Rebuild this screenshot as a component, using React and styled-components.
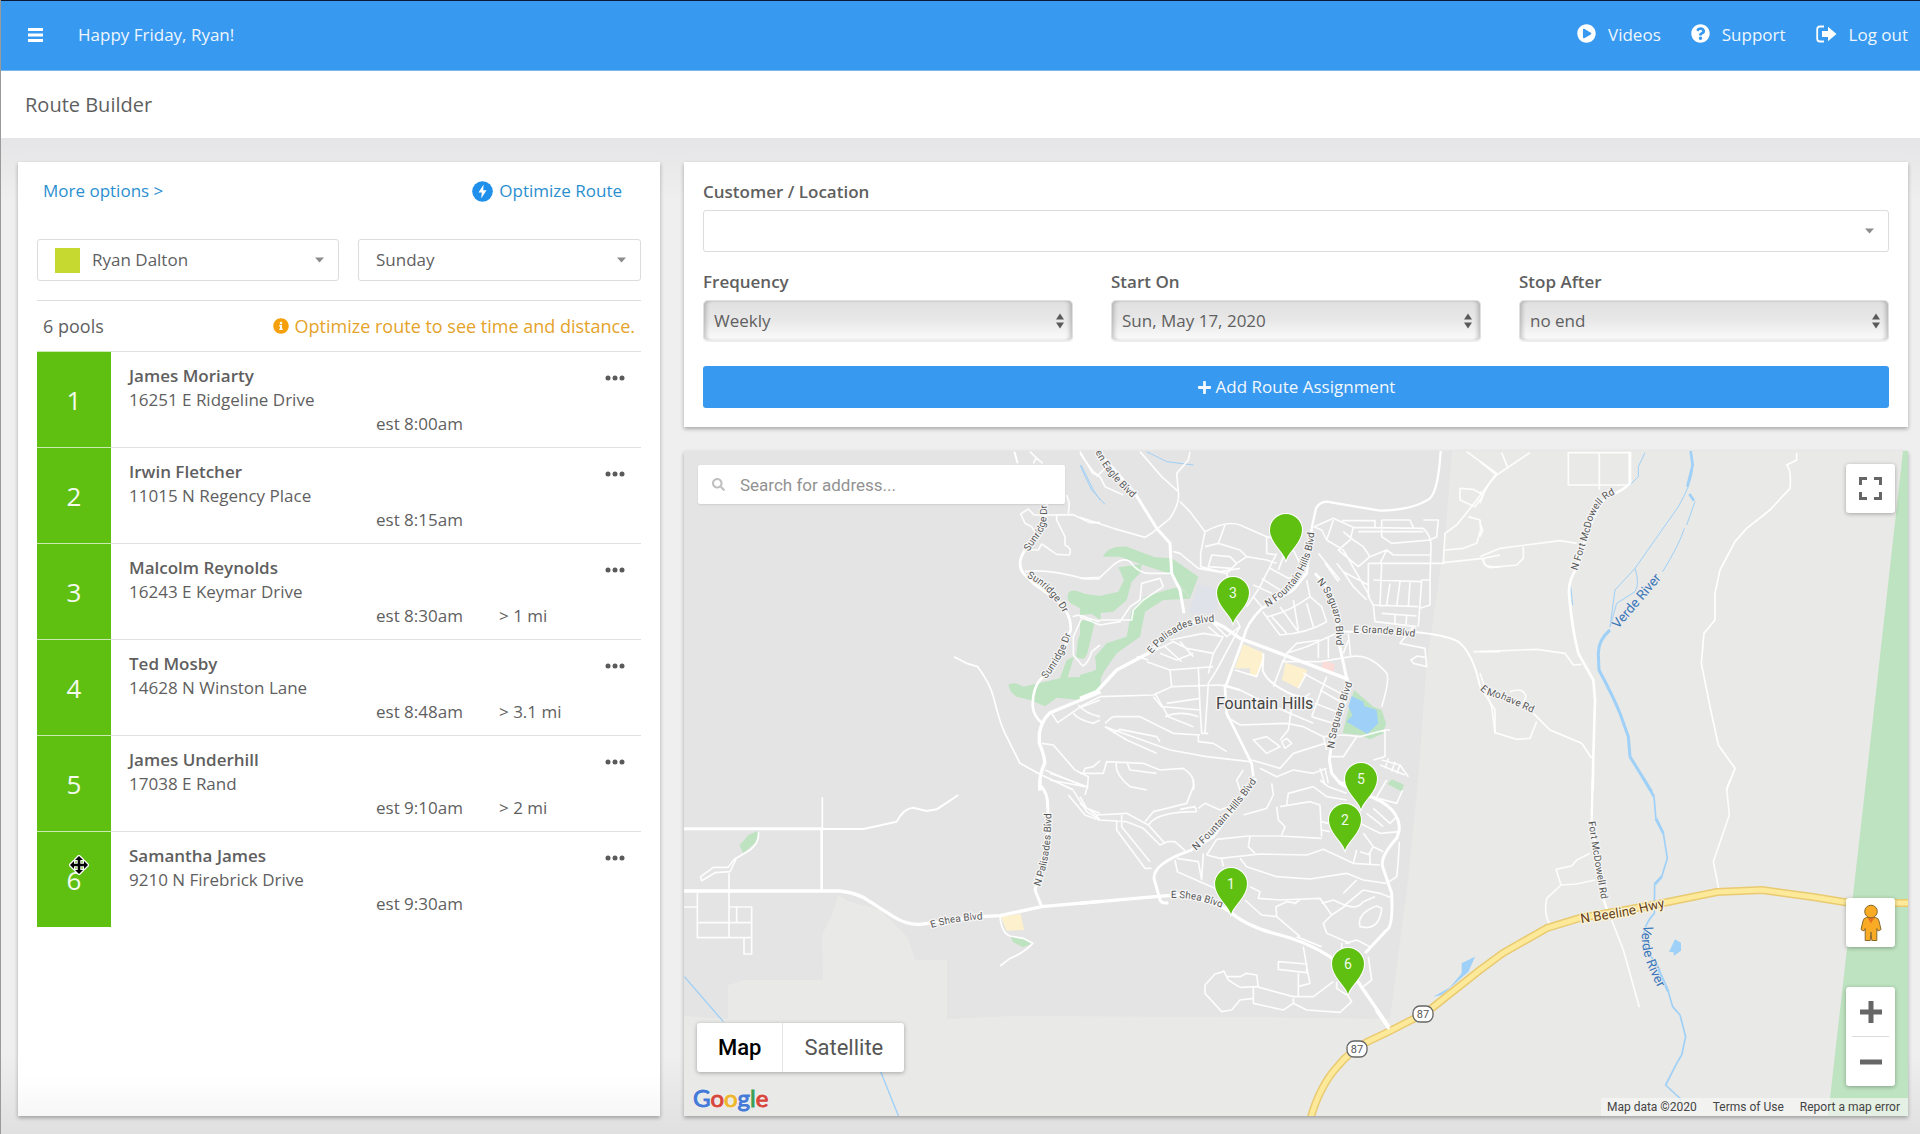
import React from "react";
import styled, { createGlobalStyle } from "styled-components";
import { FaPlayCircle, FaQuestionCircle, FaInfoCircle, FaPlus, FaSearch } from "react-icons/fa";

const GlobalStyle = createGlobalStyle`
  *, *::before, *::after { box-sizing: border-box; }
  body {
    margin: 0;
    background: #efefef;
    color: #5f5f5f;
    font-family: "Open Sans", "Noto Sans", sans-serif;
    font-size: 17px;
    line-height: 24px;
  }
  button, input, select { font: inherit; color: inherit; margin: 0; }
  a { color: inherit; text-decoration: none; }
`;

/* ---------- Page shell ---------- */

const Page = styled.div`
  display: flex;
  flex-direction: column;
  min-height: 100vh;
  border-left: 1px solid #9a9a9a;
`;

const TopBar = styled.header`
  display: flex;
  align-items: center;
  height: 71px;
  padding: 0 12px 2px 27px;
  border-top: 1px solid #0b1a33;
  border-bottom: 1px solid #7db5ef;
  background: #3799ef;
  color: #eef6fe;
`;

const MenuButton = styled.button`
  display: flex;
  padding: 0;
  border: 0;
  background: none;
  cursor: pointer;
`;

const Greeting = styled.span`
  margin-left: 35px;
`;

const TopLinks = styled.nav`
  display: flex;
  gap: 30px;
  margin-left: auto;
`;

const TopLink = styled.a`
  display: flex;
  align-items: center;
  gap: 12px;

  svg { display: block; margin-bottom: 2px; color: #fff; }
`;

const TitleBar = styled.div`
  display: flex;
  align-items: center;
  height: 67px;
  padding: 0 24px;
  background: #fff;
`;

const PageTitle = styled.h1`
  margin: 0;
  font-size: 20px;
  font-weight: 400;
`;

const Main = styled.main`
  flex: 1;
  display: grid;
  grid-template-columns: minmax(0, 642fr) minmax(0, 1224fr);
  gap: 24px;
  padding: 24px 12px 18px 17px;
  background:
    linear-gradient(to bottom, #e5e5e7, rgba(239, 239, 239, 0) 64px),
    linear-gradient(to top, #e0e0e0, #efefef 80px);
`;

const Card = styled.section`
  background: #fff;
  box-shadow: 0 2px 4px rgba(0, 0, 0, 0.3);
`;

/* ---------- Route list ---------- */

const RouteCard = styled(Card)`
  padding: 17px 19px 24px;
  background: linear-gradient(to top, #f7f7f7, #fff 40px);
`;

const LinkRow = styled.div`
  display: flex;
  justify-content: space-between;
  padding: 0 19px 0 6px;
  color: #2a8fd0;
`;

const ActionLink = styled.a`
  display: flex;
  align-items: center;
  gap: 6px;
`;

const FilterRow = styled.div`
  display: grid;
  grid-template-columns: minmax(0, 302fr) minmax(0, 283fr);
  gap: 19px;
  margin-top: 36px;
  padding-bottom: 19px;
  border-bottom: 1px solid #dedede;
`;

const SelectBox = styled.div`
  position: relative;
  display: grid;
  align-items: center;
`;

const PlainSelect = styled.select`
  width: 100%;
  height: 42px;
  padding: 0 32px 0 ${(p) => (p.$swatch ? "54px" : "17px")};
  border: 1px solid #dcdcdc;
  border-radius: 3px;
  background: #fff;
  appearance: none;
`;

const ColorSwatch = styled.span`
  position: absolute;
  left: 18px;
  width: 25px;
  height: 25px;
  background: #c5d930;
  pointer-events: none;
`;

const Caret = styled.svg`
  position: absolute;
  right: 15px;
  pointer-events: none;
`;

const SummaryRow = styled.div`
  display: flex;
  align-items: center;
  justify-content: space-between;
  height: 50px;
  padding: 0 6px;
  font-size: 18px;
`;

const Notice = styled.span`
  display: flex;
  align-items: center;
  gap: 6px;
  color: #e5a32a;

  svg { color: #f5a00a; }
`;

const StopList = styled.ol`
  margin: 0;
  padding: 0;
  list-style: none;
`;

const Stop = styled.li`
  display: grid;
  grid-template-columns: 74px minmax(0, 1fr) auto;
  height: 96px;
`;

const StopNumber = styled.div`
  position: relative;
  display: grid;
  place-items: center;
  border-top: 1px solid #c9eab0;
  background: #5fc012;
  color: #f4fbee;
  font-size: 26px;
  cursor: move;
`;

const DragCursor = styled.svg`
  position: absolute;
  left: 32px;
  top: 23px;
`;

const StopBody = styled.div`
  padding: 12px 0 0 18px;
  border-top: 1px solid #e2e2e2;
`;

const StopName = styled.div`
  font-weight: 600;
`;

const StopMeta = styled.div`
  display: grid;
  grid-template-columns: 247px 123px 1fr;

  span:first-child { grid-column: 2; }
`;

const StopMenu = styled.div`
  padding: 14px 16px 0 0;
  border-top: 1px solid #e2e2e2;
`;

const DotsButton = styled.button`
  display: flex;
  align-items: center;
  height: 24px;
  padding: 0;
  border: 0;
  background: none;
  cursor: pointer;
`;

/* ---------- Assignment form ---------- */

const RightColumn = styled.div`
  display: flex;
  flex-direction: column;
  gap: 24px;
`;

const FormCard = styled(Card)`
  display: grid;
  gap: 18px;
  padding: 18px 19px 19px;
`;

const Field = styled.div`
  display: grid;
  gap: 6px;
`;

const FieldRow = styled.div`
  display: grid;
  grid-template-columns: repeat(3, minmax(0, 1fr));
  gap: 38px;
  margin-bottom: 6px;
`;

const FieldLabel = styled.label`
  font-weight: 600;
`;

const ShadedSelect = styled.select`
  width: 100%;
  height: 42px;
  padding: 0 28px 0 10px;
  border: 1px solid #e0e0e0;
  border-bottom: 2px solid #ececec;
  border-radius: 5px;
  background: linear-gradient(to bottom, #e0e0e0, #e8e8e8 50%, #fbfbfb);
  box-shadow: inset 4px 0 4px -2px rgba(0, 0, 0, 0.22), inset -4px 0 4px -2px rgba(0, 0, 0, 0.22);
  appearance: none;
`;

const Stepper = styled.svg`
  position: absolute;
  right: 9px;
  pointer-events: none;
`;

const AddButton = styled.button`
  display: flex;
  align-items: center;
  justify-content: center;
  gap: 4px;
  height: 42px;
  border: 0;
  border-radius: 3px;
  background: #3799ef;
  color: #f2f8fe;
  cursor: pointer;
`;

/* ---------- Map ---------- */

const MapPanel = styled.section`
  position: relative;
  flex: 1;
  min-height: 600px;
  overflow: hidden;
  background: #e9e9e7;
  box-shadow: 0 2px 4px rgba(0, 0, 0, 0.3);
  color: #444;
  font-family: Roboto, sans-serif;
`;

const MapDrawing = styled.svg`
  position: absolute;
  inset: 0;
  width: 100%;
  height: 100%;
`;

const MapSearch = styled.label`
  position: absolute;
  left: 14px;
  top: 14px;
  display: flex;
  align-items: center;
  gap: 15px;
  width: 367px;
  height: 39px;
  padding: 0 14px;
  border-radius: 2px;
  background: #fff;
  box-shadow: 0 1px 2px rgba(0, 0, 0, 0.1);
  color: #c0c0c0;
`;

const SearchInput = styled.input`
  flex: 1;
  min-width: 0;
  padding: 0;
  border: 0;
  outline: 0;
  background: none;
  color: #555;

  &::placeholder { color: #929292; opacity: 1; }
`;

const Floating = styled.div`
  position: absolute;
  ${(p) => (p.$left ? `left: ${p.$left}px;` : "right: 13px;")}
  ${(p) => (p.$top ? `top: ${p.$top}px;` : `bottom: ${p.$bottom}px;`)}
  display: flex;
  flex-direction: ${(p) => (p.$row ? "row" : "column")};
  border-radius: 3px;
  background: #fff;
  box-shadow: 0 1px 4px rgba(0, 0, 0, 0.3);
`;

const MapButton = styled.button`
  display: grid;
  place-items: center;
  width: 49px;
  height: 49px;
  padding: 0;
  border: 0;
  background: none;
  cursor: pointer;
`;

const Divider = styled.div`
  height: 1px;
  margin: 0 6px;
  background: #dcdcdc;
`;

const TypeButton = styled.button`
  height: 49px;
  padding: 0 21px;
  border: 0;
  border-left: ${(p) => (p.$active ? "0" : "1px solid #e4e4e4")};
  background: none;
  color: ${(p) => (p.$active ? "#000" : "#565656")};
  font-size: 22px;
  font-weight: ${(p) => (p.$active ? 500 : 400)};
  cursor: pointer;
`;

const Logo = styled.a`
  position: absolute;
  left: 9px;
  bottom: 2px;
  font-family: Lato, sans-serif;
  font-size: 24px;
  line-height: 32px;
  text-shadow: 0 0 2px #fff, 0 0 2px #fff;
`;

const LogoLetter = styled.span`
  color: ${(p) => p.$color};
  -webkit-text-stroke: 1px ${(p) => p.$color};
`;

const Attribution = styled.div`
  position: absolute;
  right: 0;
  bottom: 0;
  display: flex;
  gap: 16px;
  padding: 0 8px 0 6px;
  background: rgba(245, 245, 245, 0.7);
  font-size: 12px;
  line-height: 18px;
`;

const RoadLabel = styled.text`
  fill: #575757;
  stroke: #f4f4f4;
  stroke-width: 8px;
  stroke-linejoin: round;
  paint-order: stroke;
  font-size: 30px;
`;

const RiverLabel = styled(RoadLabel)`
  fill: #3b77bb;
  stroke: #e9e9e7;
  stroke-width: 4px;
  font-size: 40px;
`;

const HighwayLabel = styled(RoadLabel)`
  fill: #64401a;
  stroke: #fdf3d0;
  font-size: 40px;
`;

const TownLabel = styled(RoadLabel)`
  fill: #444;
  font-size: 48px;
`;

const ShieldText = styled.text`
  fill: #555;
  font-size: 11px;
  text-anchor: middle;
`;

const PinText = styled.text`
  fill: #f1fae9;
  font-size: 14px;
  text-anchor: middle;
`;

/* ---------- Data ---------- */

const stops = [
  { name: "James Moriarty", address: "16251 E Ridgeline Drive", time: "est 8:00am" },
  { name: "Irwin Fletcher", address: "11015 N Regency Place", time: "est 8:15am" },
  { name: "Malcolm Reynolds", address: "16243 E Keymar Drive", time: "est 8:30am", distance: "> 1 mi" },
  { name: "Ted Mosby", address: "14628 N Winston Lane", time: "est 8:48am", distance: "> 3.1 mi" },
  { name: "James Underhill", address: "17038 E Rand", time: "est 9:10am", distance: "> 2 mi" },
  { name: "Samantha James", address: "9210 N Firebrick Drive", time: "est 9:30am", dragging: true },
];

const pins = [
  { x: 1286, y: 560, label: "" },
  { x: 1233, y: 623, label: "3" },
  { x: 1361, y: 809, label: "5" },
  { x: 1345, y: 850, label: "2" },
  { x: 1231, y: 914, label: "1" },
  { x: 1348, y: 994, label: "6" },
];

const shields = [
  { x: 1423, y: 1014 },
  { x: 1357, y: 1049 },
];

const PARK = "#bee3c0";
const WATER = "#9fd0f7";
const SHOP = "#fdf1cd";

/* Each tile is drawn at three times its size; roads are [width, path]. */
const tiles = [
  {
    id: "nw",
    x: 680,
    y: 440,
    areas: [
      [PARK, "M1163 465Q1170 443 1200 456L1262 482V540L1235 522 1180 494Q1160 485 1163 465Z"],
      [PARK, "M1214 545L1246 540 1222 640Q1210 665 1188 650L1194 600Z"],
      [PARK, "M985 735Q1000 722 1030 740L1140 715 1160 660 1182 650 1163 712 1235 710 1262 660V760L1200 780 1130 773 1095 799 1050 780 1010 770Q990 758 985 735Z"],
    ],
    rivers: [[3, "M1203 75L1240 150 1260 180"]],
    roads: [
      [8, "M1100 190L1095 240 1070 290 1035 330Q1008 370 1030 400L1060 430 1130 480Q1175 520 1172 570L1150 640 1085 715Q1058 740 1058 800Q1062 830 1085 848"],
      [10, "M1262 755L1110 818Q1085 840 1078 880V910Q1095 950 1094 970Q1075 1010 1080 1052"],
      [5, "M822 650L860 670 893 680Q930 730 940 770Q960 850 975 880L1020 970 1080 1003 1180 1050"],
      [6, "M1003 35L1013 70"],
      [4, "M1100 225L1180 224 1230 248H1260M1035 395Q1100 385 1215 417H1260M1045 330H1075L1085 312 1130 343 1168 345Q1178 325 1155 315V290L1130 240V225M1070 285L1055 260 1035 250 1022 222 1045 207 1062 225H1100M1160 165L1168 190 1165 220M1050 35L1065 50 1088 70M1068 55L1060 70M1200 35L1238 100 1260 110M1178 530Q1200 520 1225 535L1260 545M1205 535L1180 590V645L1208 678Q1225 670 1235 635L1260 615M1115 820L1133 848 1195 805 1260 780M1180 820Q1195 840 1240 850L1260 840M1195 795Q1215 820 1260 830M1085 910L1120 915 1185 990 1225 1010 1222 1045M1210 1000L1215 985 1240 980 1260 962M1095 990L1215 1040"],
    ],
    labels: [
      ["Sunridge Dr", "M1046 335L1085 280Q1108 235 1098 180"],
      ["Sunridge Dr", "M1040 412Q1105 440 1150 520"],
      ["Sunridge Dr", "M1098 718Q1155 650 1180 560"],
    ],
  },
  {
    id: "n",
    x: 1080,
    y: 440,
    areas: [
      ["#dfe2e8", "M355 430L430 455 400 520 325 520Z"],
      [PARK, "M68 350Q85 315 140 320L225 352 275 355 355 410 330 475 295 430 265 400 190 375 120 350Z"],
      [PARK, "M115 382L185 372 180 400 155 425 140 480 100 515 0 525V460L60 468 115 455 132 420Z"],
      [PARK, "M300 440L330 476 250 480 195 515 180 590 110 640 75 690 40 755 0 775V705L50 690 45 650 80 610 140 590 155 510 195 470 260 450Z"],
      [PARK, "M0 540L40 545 15 655H0Z"],
      [SHOP, "M490 612L552 640V660L530 710 510 705V685H465Z"],
      [SHOP, "M617 668L682 690 655 745 606 720Z"],
      ["#fbdcd8", "M730 662L765 672 758 705 722 690Z"],
      [PARK, "M822 750L880 800 905 810 918 850 910 880 870 898 840 885 788 880 800 830Z"],
      [WATER, "M815 768L850 785 852 798 890 810 895 850 862 882 800 845 818 825 805 800Z"],
      [PARK, "M935 1018L972 1035 965 1052 925 1032Z"],
    ],
    rivers: [[3, "M0 75L35 150 75 193M200 35L260 65 340 75"]],
    roads: [
      [4, "M180 35L245 110 295 155Q300 190 270 235L215 280 195 292 100 265 0 232M300 185L330 215 375 275M330 35L325 60 290 100 295 155M50 110L80 80M0 40L40 95 60 110 75 140 130 165M375 275Q440 240 480 255L560 290 600 300M375 275L362 340V380L420 395 480 385M280 335L300 340 355 385 440 400M435 255L415 310 375 320M415 310L480 330 500 350 470 370 450 350 395 345 385 380 455 385M500 350L560 360 590 370M590 340L540 440 500 500M610 350L595 390M570 385L625 415 680 400M545 415L600 450M520 435L575 460M560 290V340L590 345M640 330L660 370"],
      [4, "M0 415L60 412 100 375Q130 350 150 365Q175 400 210 400H275M0 530L60 555 120 545 150 500 180 480 185 430 240 415 250 440 190 480 160 510 155 540 60 540"],
      [4, "M548 515L600 585Q680 580 740 545L725 500 690 470 680 420M575 530L620 580M600 500L655 575M640 480L655 570M560 530Q620 520 690 470M700 560L680 490M470 370L440 400 445 420M520 470L545 500"],
      [4, "M700 262L760 235 820 262 1030 265Q1055 290 1053 320L1050 420 1025 420 1015 560M760 240L740 300 790 330 870 470M770 370L790 395 865 435M820 262L810 300 775 330 835 380 870 350 920 330 940 345H1050M905 240V290L935 310 1050 300M785 242H885V262M905 240H990L1000 262M820 300L850 320 870 350M1030 240L1075 240 1070 290 1050 300M865 370H1090L1095 280 1130 255Q1200 170 1250 100M920 330L900 370M865 370V470L880 495 1015 500M880 420L1025 425M905 370L900 500M960 425L950 500M930 430L920 495M990 427L985 500M880 495L885 545 1010 560M905 520L1010 528M945 525V552M980 527L978 555M1025 420H1050V495L1020 505M790 395L820 440 860 480M735 370L775 425M715 340L780 420M835 275H1030M740 300L725 270 705 262M790 275L820 300M1000 560L960 610 1035 625 1040 680 1000 670 993 660 1012 648 1035 652"],
      [4, "M1160 35L1250 100M1140 145L1180 148 1210 165 1185 200 1140 180ZM1165 230L1200 240 1202 270 1190 310 1150 325 1095 330M1090 368L1210 355M1260 380Q1205 385 1210 355L1260 345M1180 635H1260M1200 740L1245 810V880"],
      [4, "M805 580L812 650Q870 640 920 700Q930 720 905 800M770 580L680 620 620 640 610 665 720 665 812 650M715 600V655M745 590V655M620 640L650 610 720 600M805 600L790 640M470 540L480 560 440 590 395 545M420 590L385 560"],
      [6, "M550 640L548 690Q560 730 640 765L700 780"],
      [4, "M610 660L580 740M740 710L695 830M670 700L800 770M720 750L790 790M705 790L770 815M695 830L760 850M680 700L655 745M465 690L530 710 552 650"],
      [4, "M480 560L410 690 385 730 375 880M355 680L360 800 365 880H385M430 590L400 640 385 700M270 600L370 580 430 590M185 650L280 605 320 625 400 640M200 665L270 690 400 680M240 640L290 660 340 640M270 690L275 740 220 765 60 770M275 740L420 735 480 750 560 790 700 850M0 800L60 770M220 770L245 800 360 810M260 790L360 775M255 830Q300 810 355 830M225 760L265 830 340 860M100 830L180 830 280 880 360 885M355 885V905L400 910 440 935M75 860L270 930 380 950 510 965M100 880L120 868 230 890 240 905M75 850Q90 835 100 830M75 860L140 900 230 940M205 660L170 650M255 620L305 665M300 605L340 650"],
      [4, "M0 1000L70 1000 80 965 190 970 240 990 310 985Q350 1010 340 1050M110 965Q100 1000 150 1040L200 1050M140 965L150 990 230 1000M480 855L620 850 670 860 730 890 740 930M440 830L480 855M515 960L600 985 640 940 735 910M520 900L560 890 600 920 560 940ZM600 900L625 870 635 800 690 760M605 905L620 895 635 910 615 925ZM730 890L790 885 840 890 915 870H930M750 950H790L830 890M915 870V950L880 960M905 960L960 975 985 1010M900 975L975 1005M925 955L915 985M945 965L935 995M960 975L950 1000M490 990L470 1020 480 1050M540 985L590 1010 640 990 700 1000 740 985M735 985L745 1030M720 985L735 1035"],
      [6, "M430 735L480 750"],
      [7, "M695 265L708 205Q720 185 740 185L900 212Q1000 210 1050 175Q1075 150 1082 33"],
      [6, "M790 575H1000Q1100 585 1135 605Q1180 640 1200 740"],
      [9, "M50 30L165 160 230 265 270 310 275 400 300 450 312 520"],
      [10, "M0 775L50 755 110 690 205 640Q300 540 390 540L430 560 480 595 600 640 805 718"],
      [8, "M695 265L680 400 640 450 545 505Q500 550 492 590L435 745 440 820 515 970 520 1010"],
      [9, "M705 400Q770 470 770 520L775 600 800 715 810 740 755 910 748 960 755 1000 780 1030 835 1060"],
    ],
    labels: [
      ["en Eagle Blvd", "M46 36Q80 110 175 190"],
      ["E Palisades Blvd", "M215 642Q290 545 410 545"],
      ["N Fountain Hills Blvd", "M562 502Q700 420 704 260"],
      ["N Saguaro Blvd", "M710 425Q775 500 768 615"],
      ["E Grande Blvd", "M820 578L905 580 1020 592"],
      ["N Saguaro Blvd", "M762 926L775 850 822 715"],
    ],
  },
  {
    id: "ne",
    x: 1480,
    y: 440,
    areas: [],
    rivers: [
      [3, "M638 90Q630 140 595 200L465 385 405 450 390 560M495 38L475 80V110L450 135 400 165M645 185L620 255M613 265Q600 310 548 395M465 385Q480 430 465 455L410 490 390 560M272 440L278 495"],
      [9, "M390 570Q355 600 355 640L357 690Q400 770 420 820L445 890 450 950 515 1055"],
      [8, "M632 33L638 75 622 140M628 162L642 182"],
    ],
    roads: [
      [4, "M265 38H448V135H265ZM358 38V150M0 65L50 105Q20 130 0 190M50 105L150 38M65 38L82 80M0 155L12 165M0 250L8 270 0 290M0 350L60 325 240 302 290 310M10 355Q10 380 30 383L110 375 130 355V320M0 635L170 628 255 640 280 675 305 673M0 700L35 800 45 878 110 898 150 895 170 845M90 755Q130 740 138 770L130 790"],
      [5, "M160 820L210 870 305 910 335 955"],
      [5, "M950 38V60L920 75Q935 90 930 145L870 210 800 265 765 305 720 390 705 460V540L672 580 664 670 690 800 715 915 765 985 740 1050"],
      [8, "M450 35V130Q430 150 395 165Q350 170 290 385Q265 420 267 460Q275 560 295 640L340 720 345 780 340 950 338 1050"],
    ],
    labels: [
      ["N Fort McDowell Rd", "M292 392L330 270Q345 190 400 165"],
      ["E Mohave Rd", "M0 748Q15 768 60 775L165 822"],
    ],
    riverLabels: [["Verde River", "M414 568L570 385"]],
  },
  {
    id: "sw",
    x: 680,
    y: 780,
    areas: [
      [PARK, "M178 195Q185 190 205 165L235 152 230 185 190 220Z"],
      [PARK, "M992 470L1040 476 1058 490 1030 502 1000 487Z"],
      [SHOP, "M962 410L1022 402 1032 450 980 452Z"],
    ],
    rivers: [[4, "M13 590L130 725M600 870L657 1012"]],
    roads: [
      [9, "M0 146H427"],
      [6, "M427 147H550L650 125Q670 85 700 83L740 93 770 88 835 45"],
      [5, "M427 52V146"],
      [8, "M425 146V330"],
      [4, "M165 235L145 262 100 262 62 290 65 302 105 278 150 275 168 238M147 280V472M13 381H50M52 340V473H215V381H147M52 428H215M170 381V428M192 473V522H215V473M1110 0L1215 20M1110 -20L1222 20 1215 45M1180 32L1220 95 1260 118M1165 45L1215 105 1250 118"],
      [5, "M235 155Q240 185 210 210L165 237M960 410Q965 460 990 468L1030 475 1058 490Q1030 520 990 535L960 558"],
      [9, "M1080 0V15Q1105 40 1103 80L1105 110 1100 220Q1070 310 1065 330L1085 380"],
      [10, "M0 333H480Q540 340 570 365L640 410Q680 435 720 433L900 410 960 407 1085 380 1262 364"],
    ],
    labels: [
      ["E Shea Blvd", "M755 444Q830 420 920 418"],
      ["N Palisades Blvd", "M1080 320Q1118 220 1113 80"],
    ],
  },
  {
    id: "s",
    x: 1080,
    y: 780,
    areas: [
      [WATER, "M1060 650L1110 622 1145 580V550L1185 530 1165 575 1120 615 1085 645Z"],
      [PARK, "M935 0L968 12V36L922 12Z"],
    ],
    rivers: [],
    roads: [
      [4, "M0 70L50 105 140 100 205 135 255 190M0 50L20 85 60 100M50 105L55 120 140 125 190 145 240 195 262 185M110 120V150L195 265 215 265M125 105V140L210 245M262 185L285 185 315 212M205 135Q230 95 350 95M195 125L220 95 260 85 320 70 340 20V0M350 95L345 80 300 88M355 85L375 70 420 90 460 75M490 105L560 85 580 45 575 10M620 75L625 40 700 20M600 80L690 65 720 75 725 170M590 80L595 120 615 140 605 165M410 178L505 168 600 168 725 175M410 178L380 225M510 168L505 200 525 220M380 225L420 235 540 222 680 225 730 208 820 250 900 255"],
      [4, "M290 235L355 245 365 300M285 240L292 275 450 345M425 235L430 260M480 235L500 260 590 290 690 297 800 280 850 300 920 310M365 300L370 220M510 320L540 335 535 355 600 360 720 355 755 405 730 430 740 460 810 490M495 360L545 405 590 410M650 370L620 365 588 380 590 410 660 470M640 372L660 360M795 375L850 330 900 340 930 352M795 375Q830 390 850 365L885 350M755 405L800 375M790 340L830 300M725 370L760 360 800 378M840 440Q830 400 890 378L905 385Q900 440 860 443ZM795 490L830 480 870 500M785 488V505"],
      [4, "M670 500L680 560 690 610 655 620M595 545V568L680 578V552ZM655 580V650M430 570L445 600 480 622 530 620 640 650 700 650 760 605M440 590L480 590 500 580 530 585 535 620M430 575L405 582 375 615V640L425 695 455 690 480 660 520 655M520 620V670L610 690 640 670V655M640 670L680 690 780 697 815 665 800 640M865 530L875 600 850 620M770 605V625L800 645"],
      [4, "M840 130L900 160 958 155M820 250L830 210M870 255V215M850 160L880 200 865 225M840 215L870 225M958 185Q955 250 950 290L920 310M880 85L930 130 950 110M860 100L910 140M725 125L745 130M725 150L750 155M880 200L910 215M885 60L920 0M895 55L950 70 968 30M720 0L745 20 800 40M700 20L740 50 800 60M770 0L790 10"],
      [5, "M725 500L650 470"],
      [9, "M528 -5L400 170 330 212Q220 250 222 295L240 360Q245 372 265 368"],
      [9, "M790 5L860 45Q960 80 958 150L950 175Q900 230 908 260L935 340Q940 440 920 450L855 520"],
      [10, "M0 370L225 350 290 345Q400 360 450 395Q500 440 600 465Q680 485 750 530L830 600 930 745"],
    ],
    labels: [
      ["N Fountain Hills Blvd", "M348 212Q450 120 540 -10"],
      ["E Shea Blvd", "M273 354Q350 350 440 390"],
    ],
  },
  {
    id: "se",
    x: 1480,
    y: 780,
    areas: [[WATER, "M585 478L603 488 603 512 582 527 580 516 567 516Z"]],
    rivers: [
      [8, "M490 -5L522 50"],
      [5, "M522 50L528 120 550 160 562 235 545 290 524 310 523 400Q475 450 500 510L540 570"],
      [8, "M528 115L550 160M545 290L526 312M525 545L565 635"],
      [5, "M565 635L578 680 600 705 617 770 605 825 590 850 557 915 605 960"],
    ],
    roads: [
      [7, "M338 0L335 120 370 355 382 392"],
      [4, "M395 420L430 510 478 682M750 0L740 25 748 105 700 245 716 325M330 220L290 240 275 258 228 268 243 315 200 355Q190 400 210 435M243 315L290 312 345 300"],
    ],
    labels: [["Fort McDowell Rd", "M325 125L340 220 366 375"]],
    riverLabels: [["Verde River", "M494 434Q462 500 548 650"]],
    highwayLabels: [["N Beeline Hwy", "M304 430L440 408 590 374"]],
  },
];

const HIGHWAY =
  "M1310 1120Q1320 1085 1338 1066Q1348 1053 1367 1042L1388 1032 1427 1012 1480 970 1503 953 1547 928 1580 918 1653 905 1717 892 1762 890 1813 897 1850 903H1910";

/* ---------- Pieces ---------- */

function CurvedLabels({ as: Label, items, prefix }) {
  return (items || []).map(([text, d], i) => (
    <React.Fragment key={prefix + i}>
      <path id={prefix + i} d={d} fill="none" />
      <Label>
        <textPath href={`#${prefix}${i}`}>{text}</textPath>
      </Label>
    </React.Fragment>
  ));
}

const place = (t) => `translate(${t.x} ${t.y}) scale(${1 / 3})`;

function AreaMap() {
  return (
    <MapDrawing viewBox="684 451 1224 665" preserveAspectRatio="xMidYMid slice" role="img" aria-label="Map of Fountain Hills">
      <path fill="#e4e4e4" d="M684 451H1452L1445 540 1427 660 1418 780 1408 880 1390 1019 1250 1017 1010 1016 947 1019H728L684 1016Z" />
      <path fill="#e9e9e7" d="M838 895L848 901 880 910 908 938 915 960H947V1020H728V985L745 980H823L822 935 832 915Z" />
      <path fill={PARK} d="M1903 451H1908V1116H1828L1865 790Z" />
      {tiles.map((t) => (
        <g key={t.id} transform={place(t)} fill="none" strokeLinejoin="round">
          {t.areas.map(([fill, d]) => <path key={d} d={d} fill={fill} />)}
          {t.rivers.map(([w, d]) => <path key={d} d={d} stroke={WATER} strokeWidth={w} />)}
        </g>
      ))}
      {tiles.map((t) => (
        <g key={t.id} transform={place(t)} fill="none" stroke="#fff" strokeLinejoin="round">
          {t.roads.map(([w, d]) => <path key={d} d={d} strokeWidth={Math.max(w, 5)} strokeOpacity={w < 5 ? 0.9 : 1} />)}
        </g>
      ))}
      <path d={HIGHWAY} fill="none" stroke="#e9ca70" strokeWidth="8" />
      <path d={HIGHWAY} fill="none" stroke="#fde99a" strokeWidth="5" />
      <path d="M1376 1010L1389 1029" stroke="#fff" strokeWidth="3" />
      {tiles.map((t) => (
        <g key={t.id} transform={place(t)}>
          <CurvedLabels as={RoadLabel} items={t.labels} prefix={`${t.id}-road-`} />
          <CurvedLabels as={RiverLabel} items={t.riverLabels} prefix={`${t.id}-river-`} />
          <CurvedLabels as={HighwayLabel} items={t.highwayLabels} prefix={`${t.id}-highway-`} />
          {t.id === "n" && <TownLabel x="554" y="807" textAnchor="middle">Fountain Hills</TownLabel>}
        </g>
      ))}
      {shields.map((s) => (
        <g key={s.x} transform={`translate(${s.x} ${s.y})`}>
          <rect x="-10" y="-8" width="20" height="16" rx="7" fill="#fff" stroke="#666" strokeWidth="1.3" />
          <ShieldText y="4">87</ShieldText>
        </g>
      ))}
      {pins.map((p) => (
        <g key={p.y} transform={`translate(${p.x} ${p.y})`}>
          <path
            d="M0 0C-3 -9 -16 -18 -16 -30A16 16 0 0 1 16 -30C16 -18 3 -9 0 0Z"
            fill="#5fc012"
            stroke="#fff"
            strokeWidth="2"
            paintOrder="stroke"
          />
          <PinText y="-25">{p.label}</PinText>
        </g>
      ))}
    </MapDrawing>
  );
}

function DropCaret() {
  return (
    <Caret width="9" height="6" viewBox="0 0 9 6" aria-hidden="true">
      <path d="M0 .5H9L4.500 5.500Z" fill="#8c8c8c" />
    </Caret>
  );
}

function ShadedField({ id, label, value }) {
  return (
    <Field>
      <FieldLabel htmlFor={id}>{label}</FieldLabel>
      <SelectBox>
        <ShadedSelect id={id}>
          <option>{value}</option>
        </ShadedSelect>
        <Stepper width="8" height="16" viewBox="0 0 8 16" aria-hidden="true">
          <path d="M0 6.500H8L4 .5ZM0 9.500H8L4 15.500Z" fill="#5a5a5a" />
        </Stepper>
      </SelectBox>
    </Field>
  );
}

function MoveCursor() {
  return (
    <DragCursor width="20" height="20" viewBox="0 0 20 20" aria-hidden="true">
      <path
        d="M10 1L14 5H11V9H15V6L19 10 15 14V11H11V15H14L10 19 6 15H9V11H5V14L1 10 5 6V9H9V5H6Z"
        fill="#000"
        stroke="#fff"
        strokeWidth="2.500"
        strokeLinejoin="round"
        paintOrder="stroke"
      />
      <path d="M10 3V17M3 10H17" stroke="#000" strokeWidth="2.600" />
    </DragCursor>
  );
}

function Pegman() {
  return (
    <svg width="22" height="38" viewBox="0 0 22 38" aria-hidden="true">
      <path
        d="M6.500 13.500Q3.500 14 3 17L1 25.500 3.800 27 5.200 24.500V36.500H10.200L11 28 11.800 36.500H16.800V24.500L18.200 27 21 25.500 19 17Q18.500 14 15.500 13.500Z"
        fill="#f9ab26"
        stroke="#8a6a2c"
        strokeWidth="1"
        strokeLinejoin="round"
      />
      <path d="M7.500 13.500H14.500L11 19.500Z" fill="#e8711c" />
      <circle cx="11" cy="7.500" r="6.300" fill="#f9ab26" stroke="#8a6a2c" strokeWidth="1" />
    </svg>
  );
}

/* ---------- App ---------- */

export default function App() {
  return (
    <>
      <GlobalStyle />
      <Page>
        <TopBar>
          <MenuButton aria-label="Menu">
            <svg width="15" height="14" viewBox="0 0 15 14">
              <path d="M0 0H15V3H0ZM0 5.500H15V8.500H0ZM0 11H15V14H0Z" fill="#fff" />
            </svg>
          </MenuButton>
          <Greeting>Happy Friday, Ryan!</Greeting>
          <TopLinks>
            <TopLink href="#videos"><FaPlayCircle size={19} />Videos</TopLink>
            <TopLink href="#support"><FaQuestionCircle size={19} />Support</TopLink>
            <TopLink href="#logout">
              <svg width="21" height="18" viewBox="0 0 21 18" aria-hidden="true">
                <path d="M8 1.500H4Q1.200 1.500 1.200 4.200V13.800Q1.200 16.500 4 16.500H8" fill="none" stroke="#fff" strokeWidth="1.800" />
                <path d="M6 6H12V1.800L20.500 9 12 16.200V12H6Z" fill="#fff" />
              </svg>
              Log out
            </TopLink>
          </TopLinks>
        </TopBar>
        <TitleBar>
          <PageTitle>Route Builder</PageTitle>
        </TitleBar>
        <Main>
          <RouteCard>
            <LinkRow>
              <ActionLink href="#options">More options &gt;</ActionLink>
              <ActionLink href="#optimize">
                <svg width="21" height="21" viewBox="0 0 21 21" aria-hidden="true">
                  <circle cx="10.500" cy="10.500" r="10.300" fill="#1e8fea" />
                  <path d="M11.600 3.500L6.500 11.600H9.800L9.200 17.500 14.500 9.200H11.200Z" fill="#fff" />
                </svg>
                Optimize Route
              </ActionLink>
            </LinkRow>
            <FilterRow>
              <SelectBox>
                <PlainSelect $swatch aria-label="Technician">
                  <option>Ryan Dalton</option>
                </PlainSelect>
                <ColorSwatch />
                <DropCaret />
              </SelectBox>
              <SelectBox>
                <PlainSelect aria-label="Day">
                  <option>Sunday</option>
                </PlainSelect>
                <DropCaret />
              </SelectBox>
            </FilterRow>
            <SummaryRow>
              <span>6 pools</span>
              <Notice><FaInfoCircle size={16} />Optimize route to see time and distance.</Notice>
            </SummaryRow>
            <StopList>
              {stops.map((s, i) => (
                <Stop key={s.name}>
                  <StopNumber>
                    {i + 1}
                    {s.dragging && <MoveCursor />}
                  </StopNumber>
                  <StopBody>
                    <StopName>{s.name}</StopName>
                    <div>{s.address}</div>
                    <StopMeta>
                      <span>{s.time}</span>
                      {s.distance && <span>{s.distance}</span>}
                    </StopMeta>
                  </StopBody>
                  <StopMenu>
                    <DotsButton aria-label={`Options for ${s.name}`}>
                      <svg width="20" height="6" viewBox="0 0 20 6">
                        <g fill="#5a5a5a">
                          <circle cx="3" cy="3" r="2.500" />
                          <circle cx="10" cy="3" r="2.500" />
                          <circle cx="17" cy="3" r="2.500" />
                        </g>
                      </svg>
                    </DotsButton>
                  </StopMenu>
                </Stop>
              ))}
            </StopList>
          </RouteCard>
          <RightColumn>
            <FormCard>
              <Field>
                <FieldLabel htmlFor="customer">Customer / Location</FieldLabel>
                <SelectBox>
                  <PlainSelect id="customer" defaultValue="">
                    <option value="" aria-label="None" />
                  </PlainSelect>
                  <DropCaret />
                </SelectBox>
              </Field>
              <FieldRow>
                <ShadedField id="frequency" label="Frequency" value="Weekly" />
                <ShadedField id="start" label="Start On" value="Sun, May 17, 2020" />
                <ShadedField id="stop" label="Stop After" value="no end" />
              </FieldRow>
              <AddButton><FaPlus size={15} />Add Route Assignment</AddButton>
            </FormCard>
            <MapPanel>
              <AreaMap />
              <MapSearch>
                <FaSearch size={13} />
                <SearchInput type="text" placeholder="Search for address..." aria-label="Search for address" />
              </MapSearch>
              <Floating $top={13}>
                <MapButton aria-label="Full screen">
                  <svg width="23" height="23" viewBox="0 0 23 23">
                    <path d="M1.500 8V1.500H8M15 1.500H21.500V8M21.500 15V21.500H15M8 21.500H1.500V15" fill="none" stroke="#666" strokeWidth="3" />
                  </svg>
                </MapButton>
              </Floating>
              <Floating $bottom={169}>
                <MapButton aria-label="Street view"><Pegman /></MapButton>
              </Floating>
              <Floating $bottom={30}>
                <MapButton aria-label="Zoom in">
                  <svg width="22" height="22" viewBox="0 0 22 22">
                    <path d="M11 0V22M0 11H22" stroke="#666" strokeWidth="5" />
                  </svg>
                </MapButton>
                <Divider />
                <MapButton aria-label="Zoom out">
                  <svg width="22" height="22" viewBox="0 0 22 22">
                    <path d="M0 11H22" stroke="#666" strokeWidth="5" />
                  </svg>
                </MapButton>
              </Floating>
              <Floating $left={13} $bottom={44} $row>
                <TypeButton $active>Map</TypeButton>
                <TypeButton>Satellite</TypeButton>
              </Floating>
              <Logo href="#google" aria-label="Google">
                {[["G", "#4479d8"], ["o", "#d8463b"], ["o", "#edb62c"], ["g", "#4479d8"], ["l", "#3b9e55"], ["e", "#d8463b"]].map(([c, color], i) => (
                  <LogoLetter key={i} $color={color}>{c}</LogoLetter>
                ))}
              </Logo>
              <Attribution>
                <span>Map data ©2020</span>
                <a href="#terms">Terms of Use</a>
                <a href="#report">Report a map error</a>
              </Attribution>
            </MapPanel>
          </RightColumn>
        </Main>
      </Page>
    </>
  );
}
